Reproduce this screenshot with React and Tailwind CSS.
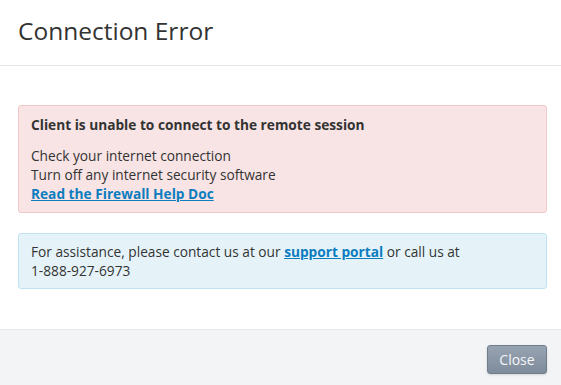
export default function App() {
  return (
    <div className="w-[561px] h-[385px] bg-white flex flex-col text-[#333] font-['Open_Sans',sans-serif] overflow-hidden">
      <div className="h-[66px] border-b border-[#e5e5e5] flex items-center px-[18px]">
        <h1 className="text-[24.5px] leading-none font-normal text-[#333] -mt-[2px]">Connection Error</h1>
      </div>

      <div className="pl-[18px] pr-[14px] pt-[39px] pb-[40px] flex flex-col gap-[20px] text-[13.7px] leading-[19px]">
        <div className="bg-[#f8e4e4] border border-[#f2c9c9] rounded-[3px] px-[12px] pt-[9px] pb-[9px]">
          <p className="font-bold">Client is unable to connect to the remote session</p>
          <div className="mt-[12px]">
            <p>Check your internet connection</p>
            <p>Turn off any internet security software</p>
            <a href="#" className="font-bold text-[#0b7dbf] underline">
              Read the Firewall Help Doc
            </a>
          </div>
        </div>

        <div className="bg-[#e5f3f9] border border-[#bfe3f2] rounded-[3px] px-[12px] py-[8px]">
          <p>
            For assistance, please contact us at our{" "}
            <a href="#" className="font-bold text-[#0b7dbf] underline">
              support portal
            </a>{" "}
            or call us at
          </p>
          <p>1-888-927-6973</p>
        </div>
      </div>

      <div className="flex-1 bg-[#f3f4f6] border-t border-[#e5e5e5] flex justify-end items-start pt-[15px] pr-[14px]">
        <button className="w-[60px] h-[29px] rounded-[3px] border border-[#6f7c8c] bg-gradient-to-b from-[#97a3b1] to-[#7f8c9c] text-[#f4f6f8] text-[14px] shadow-sm">
          Close
        </button>
      </div>
    </div>
  );
}
